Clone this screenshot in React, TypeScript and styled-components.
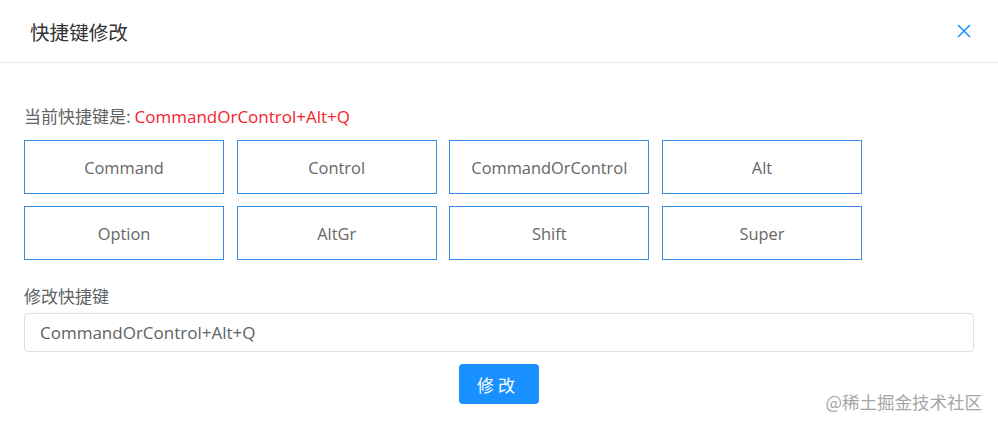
import React, { useState } from 'react';
import styled, { createGlobalStyle } from 'styled-components';

const GlobalStyle = createGlobalStyle`
  html, body {
    margin: 0;
    padding: 0;
    background: #fff;
  }
  body {
    font-family: "Open Sans", "Noto Sans CJK SC", sans-serif;
  }
`;

const Dialog = styled.div`
  position: relative;
  width: 998px;
  height: 427px;
  background: #fff;
  box-sizing: border-box;
`;

const Header = styled.div`
  height: 63px;
  box-sizing: border-box;
  display: flex;
  align-items: center;
  justify-content: space-between;
  padding: 0 26px 0 30px;
  border-bottom: 1px solid #e8e8e8;
`;

const Title = styled.h2`
  margin: 0;
  font-size: 19.6px;
  font-weight: 400;
  color: #333;
  font-family: "Noto Sans CJK SC", sans-serif;
`;

const CloseButton = styled.button`
  border: 0;
  background: none;
  padding: 0;
  width: 16px;
  height: 16px;
  display: flex;
  align-items: center;
  justify-content: center;
  cursor: pointer;
`;

const Body = styled.div`
  padding: 41px 24px 0;
  display: flex;
  flex-direction: column;
`;

const Current = styled.div`
  font-size: 17px;
  line-height: 24px;
  color: #606266;
  font-family: "Noto Sans CJK SC", sans-serif;
  margin-bottom: 11px;
`;

const Accent = styled.span`
  color: #f5222d;
  font-family: "Open Sans", "Noto Sans CJK SC", sans-serif;
`;

const KeyGrid = styled.div`
  display: grid;
  grid-template-columns: repeat(4, 200px);
  column-gap: 12.67px;
  row-gap: 12px;
`;

const KeyButton = styled.button<{ $active?: boolean }>`
  height: 54px;
  box-sizing: border-box;
  border: 1px solid #3a8ee6;
  background: ${(p) => (p.$active ? '#ecf5ff' : '#fff')};
  color: #666;
  font-size: 16.4px;
  font-family: "Open Sans", sans-serif;
  cursor: pointer;
  padding: 0;
`;

const Label = styled.div`
  margin-top: 25px;
  font-size: 17px;
  line-height: 22px;
  color: #606266;
  font-family: "Noto Sans CJK SC", sans-serif;
`;

const Input = styled.input`
  margin-top: 6px;
  height: 39px;
  box-sizing: border-box;
  width: 950px;
  border: 1px solid #dcdfe6;
  border-radius: 4px;
  padding: 0 15px;
  font-size: 17px;
  color: #606266;
  font-family: "Open Sans", sans-serif;
  outline: none;
`;

const Footer = styled.div`
  display: flex;
  justify-content: center;
  margin-top: 12px;
`;

const SubmitButton = styled.button`
  width: 80px;
  height: 40px;
  border: 0;
  border-radius: 4px;
  background: #1890ff;
  color: #fff;
  font-size: 17px;
  letter-spacing: 4px;
  padding-left: 4px;
  font-family: "Noto Sans CJK SC", sans-serif;
  cursor: pointer;
`;

const Watermark = styled.div`
  position: absolute;
  right: 16px;
  bottom: 14px;
  font-size: 17.5px;
  line-height: 22px;
  color: #a6a6a6;
  font-family: "Noto Sans CJK SC", sans-serif;
`;

const keys = ['Command', 'Control', 'CommandOrControl', 'Alt', 'Option', 'AltGr', 'Shift', 'Super'];

const App = () => {
  const [value, setValue] = useState('CommandOrControl+Alt+Q');
  return (
    <>
      <GlobalStyle />
      <Dialog>
        <Header>
          <Title>快捷键修改</Title>
          <CloseButton aria-label="close">
            <svg width="14" height="14" viewBox="0 0 14 14">
              <path d="M1 1L13 13M13 1L1 13" stroke="#1890ff" strokeWidth="1.5" fill="none" />
            </svg>
          </CloseButton>
        </Header>
        <Body>
          <Current>
            当前快捷键是: <Accent>CommandOrControl+Alt+Q</Accent>
          </Current>
          <KeyGrid>
            {keys.map((k) => (
              <KeyButton key={k} onClick={() => setValue((v) => v)}>
                {k}
              </KeyButton>
            ))}
          </KeyGrid>
          <Label>修改快捷键</Label>
          <Input value={value} onChange={(e) => setValue(e.target.value)} />
          <Footer>
            <SubmitButton>修改</SubmitButton>
          </Footer>
        </Body>
        <Watermark>@稀土掘金技术社区</Watermark>
      </Dialog>
    </>
  );
};

export default App;
